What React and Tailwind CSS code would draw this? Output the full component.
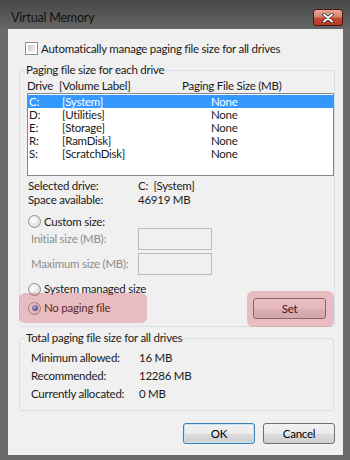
import React from 'react';

const drives = [
  { d: 'C:', label: '[System]', size: 'None', selected: true },
  { d: 'D:', label: '[Utilities]', size: 'None' },
  { d: 'E:', label: '[Storage]', size: 'None' },
  { d: 'R:', label: '[RamDisk]', size: 'None' },
  { d: 'S:', label: '[ScratchDisk]', size: 'None' },
];

function Radio({ checked }) {
  return (
    <span className="w-[13px] h-[13px] rounded-full border border-[#8e8f8f] bg-[radial-gradient(circle_at_35%_35%,#ffffff_0%,#e6e6e6_55%,#c9c9c9_100%)] flex items-center justify-center shrink-0">
      {checked && (
        <span className="w-[6px] h-[6px] rounded-full bg-[radial-gradient(circle_at_35%_35%,#a9cdf5_0%,#2c6cb9_55%,#173c73_100%)]" />
      )}
    </span>
  );
}

function Btn({ children, primary }) {
  return (
    <button
      type="button"
      className={`w-[72px] h-[21px] rounded-[3px] border text-black bg-[linear-gradient(#f2f2f2_0%,#ebebeb_50%,#dddddd_51%,#cfcfcf_100%)] ${
        primary ? 'border-[#3c7fb1] shadow-[inset_0_0_0_1px_#c4e5f6]' : 'border-[#707070]'
      }`}
    >
      {children}
    </button>
  );
}

export default function App() {
  return (
    <div className="w-[350px] h-[460px] bg-[#6a6a6a] flex flex-col font-['Lato','Noto_Sans',sans-serif] text-[11.5px] tracking-[-0.25px] text-[#1a1a1a] overflow-hidden">
      {/* title bar */}
      <div className="h-[29px] shrink-0 flex bg-[linear-gradient(#474747,#666666)]">
        <span className="pl-[11px] pt-[9px] leading-[17px] text-[12.5px] tracking-[-0.2px] text-[#111]">Virtual Memory</span>
        <div className="ml-auto mr-[7px] mt-[9px] w-[30px] h-[17px] rounded-[3px] border border-[#4a1510] bg-[linear-gradient(#e9a898_0%,#d88270_45%,#c24a33_55%,#b93a24_100%)] flex items-center justify-center">
          <svg width="12" height="10" viewBox="0 0 12 10">
            <path d="M2 1.5 L10 8.5 M10 1.5 L2 8.5" stroke="#3a2a2a" strokeWidth="3.6" strokeLinecap="round" />
            <path d="M2 1.5 L10 8.5 M10 1.5 L2 8.5" stroke="#ffffff" strokeWidth="2" strokeLinecap="round" />
          </svg>
        </div>
      </div>

      {/* client area */}
      <div className="ml-[8px] w-[335px] h-[426px] bg-[#f0f0f0] flex flex-col">
        <label className="mt-[13px] ml-[17px] h-[13px] flex items-center gap-[3px]">
          <span className="w-[13px] h-[13px] border border-[#8e8f8f] bg-white p-[2px] shrink-0">
            <span className="block w-full h-full bg-[linear-gradient(135deg,#c5c9cf,#f4f4f4)]" />
          </span>
          <span>Automatically manage paging file size for all drives</span>
        </label>

        {/* paging file per drive */}
        <fieldset className="mt-[7px] ml-[11px] w-[315px] h-[265px] border border-[#d5dfe5] rounded-[3px] pl-[7px]">
          <legend className="ml-[-2px] px-[1px] leading-[16px]">Paging file size for each drive</legend>
          <div className="h-[15px] flex items-center">
            <span className="w-[32px]">Drive</span>
            <span className="w-[123px]">[Volume Label]</span>
            <span>Paging File Size (MB)</span>
          </div>
          <div className="w-[307px] h-[83px] border border-[#828790] bg-white pt-[1px]">
            {drives.map((r) => (
              <div
                key={r.d}
                className={`h-[13px] flex items-center pl-[1px] leading-[12px] ${r.selected ? 'bg-[#3399ff] text-white' : ''}`}
              >
                <span className="w-[33px]">{r.d}</span>
                <span className="w-[149px]">{r.label}</span>
                <span>{r.size}</span>
              </div>
            ))}
          </div>

          <div className="mt-[3px] pl-[1px]">
            <div className="h-[14px] flex items-center">
              <span className="w-[110px]">Selected drive:</span>
              <span>C:&nbsp;&nbsp;[System]</span>
            </div>
            <div className="h-[14px] flex items-center">
              <span className="w-[110px]">Space available:</span>
              <span>46919 MB</span>
            </div>
          </div>

          <div className="mt-[8px] h-[13px] pl-[1px] flex items-center gap-[3px]">
            <Radio />
            <span>Custom size:</span>
          </div>
          <div className="h-[22px] pl-[4px] flex items-center text-[#8d8d8d]">
            <span className="w-[107px]">Initial size (MB):</span>
            <span className="w-[74px] h-[22px] border border-[#b9bcbf] bg-[#f0f0f0]" />
          </div>
          <div className="mt-[3px] h-[22px] pl-[4px] flex items-center text-[#8d8d8d]">
            <span className="w-[107px]">Maximum size (MB):</span>
            <span className="w-[74px] h-[22px] border border-[#b9bcbf] bg-[#f0f0f0]" />
          </div>

          <div className="mt-[7px] w-[307px] flex items-start justify-between">
            <div className="pl-[1px]">
              <div className="h-[14px] flex items-center gap-[3px]">
                <Radio />
                <span>System managed size</span>
              </div>
              <div className="mt-[5px] h-[14px] flex items-center gap-[3px] relative">
                <Radio checked />
                <span>No paging file</span>
                <span className="absolute left-[-9px] top-[-8px] w-[128px] h-[30px] rounded-[6px] bg-[rgba(214,70,84,0.3)] pointer-events-none" />
              </div>
            </div>
            <div className="mt-[16px] mr-[8px] relative">
              <button
                type="button"
                className="w-[73px] h-[21px] rounded-[3px] border border-[#707070] text-black bg-[linear-gradient(#f2f2f2_0%,#ebebeb_50%,#dddddd_51%,#cfcfcf_100%)]"
              >
                Set
              </button>
              <span className="absolute left-[-6px] top-[-7px] w-[87px] h-[36px] rounded-[6px] bg-[rgba(214,70,84,0.3)] pointer-events-none" />
            </div>
          </div>
        </fieldset>

        {/* totals */}
        <fieldset className="mt-[3px] ml-[11px] w-[315px] h-[81px] border border-[#d5dfe5] rounded-[3px] pl-[11px]">
          <legend className="ml-[-6px] px-[1px] leading-[16px]">Total paging file size for all drives</legend>
          <div className="pt-[3px]">
            <div className="h-[18px] flex items-center">
              <span className="w-[108px]">Minimum allowed:</span>
              <span>16 MB</span>
            </div>
            <div className="h-[18px] flex items-center">
              <span className="w-[108px]">Recommended:</span>
              <span>12286 MB</span>
            </div>
            <div className="h-[18px] flex items-center">
              <span className="w-[108px]">Currently allocated:</span>
              <span>0 MB</span>
            </div>
          </div>
        </fieldset>

        <div className="mt-[12px] mr-[8px] flex justify-end gap-[8px]">
          <Btn primary>OK</Btn>
          <Btn>Cancel</Btn>
        </div>
      </div>
    </div>
  );
}
